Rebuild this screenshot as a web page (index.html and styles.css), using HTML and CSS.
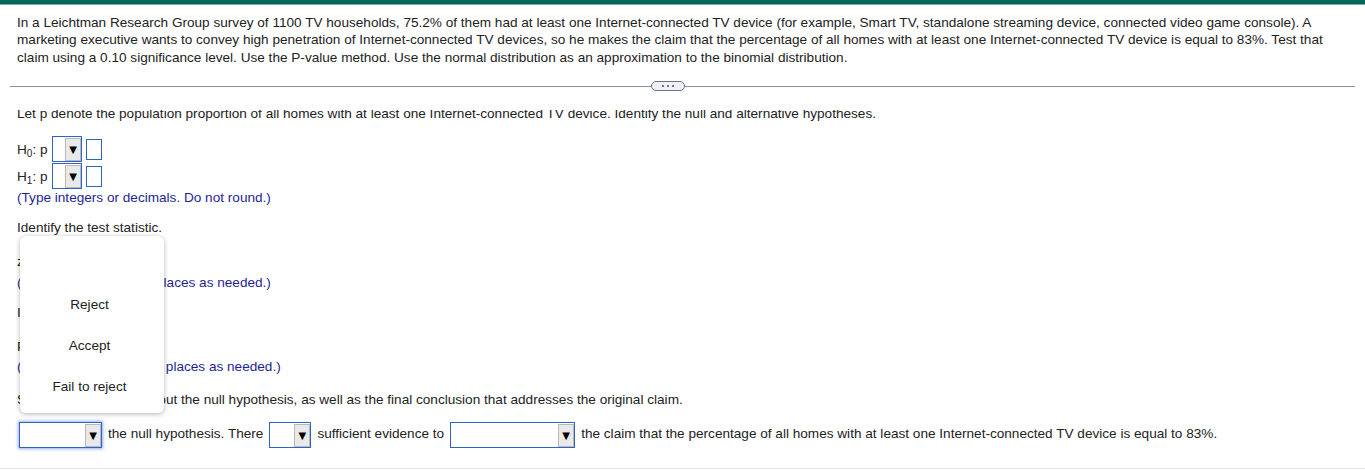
FILE: index.html
```html
<!DOCTYPE html>
<html>
<head>
<meta charset="utf-8">
<link rel="stylesheet" href="styles.css">
</head>
<body>
<div class="topbar"></div>
<div class="problem">In a Leichtman Research Group survey of 1100 TV households, 75.2% of them had at least one Internet-connected TV device (for example, Smart TV, standalone streaming device, connected video game console). A marketing executive wants to convey high penetration of Internet-connected TV devices, so he makes the claim that the percentage of all homes with at least one Internet-connected TV device is equal to 83%. Test that claim using a 0.10 significance level. Use the P-value method. Use the normal distribution as an approximation to the binomial distribution.</div>
<div class="sep"><span class="line"></span><span class="pill"><i></i><i></i><i></i></span><span class="line"></span></div>
<div class="pane">
  <p class="lead">Let p denote the population proportion of all homes with at least one Internet-connected TV device. Identify the null and alternative hypotheses.</p>
  <div class="hyp">
    <div class="hrow"><span class="hlabel">H<sub>0</sub>: p</span><span class="sel s-op"><span class="btn">▼</span></span><span class="inp"></span></div>
    <div class="hrow"><span class="hlabel">H<sub>1</sub>: p</span><span class="sel s-op"><span class="btn">▼</span></span><span class="inp"></span></div>
  </div>
  <p class="note">(Type integers or decimals. Do not round.)</p>
  <p class="q">Identify the test statistic.</p>
  <div class="arow">z = <span class="inp wide"></span></div>
  <p class="note">(Round to two decimal places as needed.)</p>
  <p class="q">Identify the P-value.</p>
  <div class="arow">P-value = <span class="inp wide"></span></div>
  <p class="note">(Round to three decimal places as needed.)</p>
  <p class="q last">State the conclusion about the null hypothesis, as well as the final conclusion that addresses the original claim.</p>
  <div class="final">
    <span class="sel s-a focus"><span class="btn">▼</span></span>
    <span class="ft">the null hypothesis. There</span>
    <span class="sel s-b"><span class="btn">▼</span></span>
    <span class="ft">sufficient evidence to</span>
    <span class="sel s-c"><span class="btn">▼</span></span>
    <span class="ft">the claim that the percentage of all homes with at least one Internet-connected TV device is equal to 83%.</span>
  </div>
  <div class="menu">
    <div class="opt"></div>
    <div class="opt">Reject</div>
    <div class="opt">Accept</div>
    <div class="opt">Fail to reject</div>
  </div>
</div>
</body>
</html>
```
FILE: styles.css
```css
body {
  margin: 0;
  font-family: "Liberation Sans", Arial, sans-serif;
  font-size: 13.6px;
  color: #222;
  background: #fff;
}
.topbar {
  height: 4px;
  background: #00665a;
  border-bottom: 1px solid #6fb3a8;
}
.problem {
  padding: 8.5px 20px 0 17px;
  line-height: 17.5px;
}
.sep {
  display: grid;
  grid-template-columns: 641px 34px 1fr;
  align-items: center;
  height: 10px;
  margin: 15px 10px 0;
}
.line {
  height: 1px;
  background: #8790a3;
}
.pill {
  height: 8px;
  border: 1px solid #6b7584;
  border-radius: 5px;
  background: #eef1f5;
  display: flex;
  justify-content: center;
  align-items: center;
  gap: 3px;
}
.pill i {
  width: 2px;
  height: 2px;
  background: #4a5260;
  border-radius: 50%;
}
.pane {
  position: relative;
  margin-top: 19px;
  overflow: hidden;
  padding: 0 17px 20px;
  border-bottom: 1px solid #e6e6e6;
  line-height: 17px;
}
.pane p { margin: 0; }
.pane .lead { margin-top: -5.5px; }
.hyp {
  margin-top: 14.5px;
  display: flex;
  flex-direction: column;
  gap: 1px;
}
.hrow {
  display: flex;
  align-items: center;
  height: 26px;
}
.hlabel { width: 35px; }
.hlabel sub {
  font-size: 10px;
  vertical-align: -3px;
  line-height: 0;
}
.sel {
  height: 26px;
  box-sizing: border-box;
  border: 1px solid #2f63c8;
  background: #fff;
  display: flex;
  justify-content: flex-end;
  align-items: center;
  flex: none;
}
.s-op { width: 30px; }
.s-a { width: 83px; }
.s-b { width: 42px; }
.s-c { width: 125px; }
.focus { box-shadow: 0 0 3px 1px rgba(60, 110, 220, 0.55); }
.btn {
  width: 16px;
  height: 23px;
  box-sizing: border-box;
  border: 1px solid #b9b9b9;
  background: #e9e9e9;
  font-family: "DejaVu Sans", sans-serif;
  font-size: 10px;
  color: #000;
  display: flex;
  align-items: center;
  justify-content: center;
}
.inp {
  width: 16px;
  height: 21px;
  box-sizing: border-box;
  border: 1px solid #2f63c8;
  margin-left: 4px;
}
.inp.wide { width: 60px; height: 22px; margin-left: 0; }
.note { color: #1f1f96; }
.pane .q { margin-top: 13px; }
.arow {
  margin-top: 14px;
  height: 23.5px;
  display: flex;
  align-items: center;
  gap: 4px;
}
.pane .q.last { margin-top: 15.5px; }
.final {
  margin: 14.5px 0 0 2px;
  display: flex;
  align-items: center;
  gap: 6px;
}
.ft { margin-bottom: 3px; }
.menu {
  position: absolute;
  left: 20px;
  top: 126px;
  width: 144px;
  height: 177px;
  box-sizing: border-box;
  padding: 7px 5px 0 0;
  background: #fff;
  border-radius: 6px;
  box-shadow: 0 1px 5px rgba(0, 0, 0, 0.3);
  display: flex;
  flex-direction: column;
}
.opt {
  height: 41px;
  flex: none;
  display: flex;
  align-items: center;
  justify-content: center;
}
```
